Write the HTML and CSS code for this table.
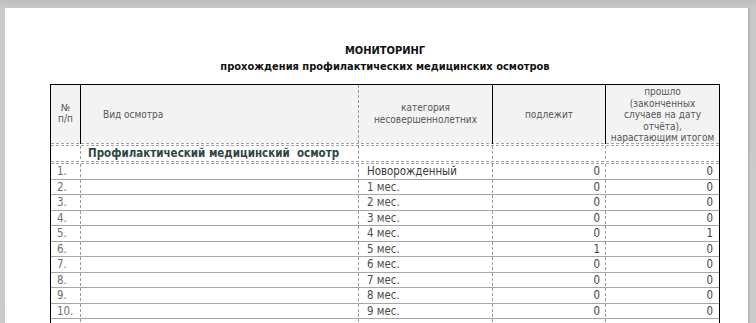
FILE: index.html
```html
<!DOCTYPE html>
<html lang="ru">
<head>
<meta charset="utf-8">
<title>Мониторинг</title>
<link rel="stylesheet" href="styles.css">
</head>
<body>
<div class="page">
  <div class="sheet">
    <div class="title">
      <div>МОНИТОРИНГ</div>
      <div>прохождения профилактических медицинских осмотров</div>
    </div>
    <div class="grid">
      <div class="row head">
        <div class="c c1 solid">№<br>п/п</div>
        <div class="c c2 dash left">Вид осмотра</div>
        <div class="c c3 solid">категория<br>несовершеннолетних</div>
        <div class="c c4 solid">подлежит</div>
        <div class="c c5">прошло<br>(законченных<br>случаев на дату<br>отчёта),<br>нарастающим итогом</div>
      </div>
      <div class="dbl"></div>
      <div class="row section">
        <div class="c dash"></div>
        <div class="c dash sec-title">Профилактический медицинский&nbsp; осмотр</div>
        <div class="c dash"></div>
        <div class="c dash"></div>
        <div class="c"></div>
      </div>
      <div class="dbl"></div>
      <div class="row data"><div class="c dash n">1.</div><div class="c dash"></div><div class="c dash cat dark">Новорожденный</div><div class="c dash num">0</div><div class="c num">0</div></div>
      <div class="row data"><div class="c dash n">2.</div><div class="c dash"></div><div class="c dash cat">1 мес.</div><div class="c dash num">0</div><div class="c num">0</div></div>
      <div class="row data"><div class="c dash n">3.</div><div class="c dash"></div><div class="c dash cat">2 мес.</div><div class="c dash num">0</div><div class="c num">0</div></div>
      <div class="row data"><div class="c dash n">4.</div><div class="c dash"></div><div class="c dash cat">3 мес.</div><div class="c dash num">0</div><div class="c num">0</div></div>
      <div class="row data"><div class="c dash n">5.</div><div class="c dash"></div><div class="c dash cat">4 мес.</div><div class="c dash num">0</div><div class="c num">1</div></div>
      <div class="row data"><div class="c dash n">6.</div><div class="c dash"></div><div class="c dash cat">5 мес.</div><div class="c dash num">1</div><div class="c num">0</div></div>
      <div class="row data"><div class="c dash n">7.</div><div class="c dash"></div><div class="c dash cat">6 мес.</div><div class="c dash num">0</div><div class="c num">0</div></div>
      <div class="row data"><div class="c dash n">8.</div><div class="c dash"></div><div class="c dash cat">7 мес.</div><div class="c dash num">0</div><div class="c num">0</div></div>
      <div class="row data"><div class="c dash n">9.</div><div class="c dash"></div><div class="c dash cat">8 мес.</div><div class="c dash num">0</div><div class="c num">0</div></div>
      <div class="row data"><div class="c dash n">10.</div><div class="c dash"></div><div class="c dash cat">9 мес.</div><div class="c dash num">0</div><div class="c num">0</div></div>
      <div class="row tail"><div class="c dash"></div><div class="c dash"></div><div class="c dash"></div><div class="c dash"></div><div class="c"></div></div>
    </div>
  </div>
</div>
</body>
</html>
```

FILE: styles.css
```css
html, body {
  margin: 0;
  height: 100%;
  overflow: hidden;
}
body {
  background: linear-gradient(180deg, #bdbdbd 0, #c9c9c9 8px, #cbcbcb 100%);
  padding: 8px 8px 0 5px;
  box-sizing: border-box;
}
.page {
  background: #fff;
  height: 400px;
  box-shadow: 1px 0 0 #b2b2b2, 2px 0 1px rgba(0,0,0,0.08);
  padding-top: 35px;
  box-sizing: border-box;
}
.sheet {
  margin-left: 45px;
  width: 670px;
}
.title {
  font-family: "DejaVu Sans", sans-serif;
  font-stretch: condensed;
  font-weight: bold;
  font-size: 11px;
  line-height: 16px;
  text-align: center;
  color: #111;
  margin-bottom: 9px;
}
.grid {
  border-left: 1px solid #000;
  border-right: 1px solid #000;
  font-family: "DejaVu Sans", sans-serif;
  font-stretch: condensed;
}
.row {
  display: grid;
  grid-template-columns: 30px 278px 134px 113px 113px;
}
.c {
  box-sizing: border-box;
  min-width: 0;
}
.dash {
  background-image: repeating-linear-gradient(180deg, #9a9a9a 0 3px, transparent 3px 5px);
  background-size: 1px 100%;
  background-position: right top;
  background-repeat: no-repeat;
}
.solid {
  border-right: 1px solid #000;
}
.head {
  border-top: 1px solid #000;
  height: 58px;
  background-color: #f3f3f3;
  font-size: 10px;
  line-height: 11.5px;
  color: #555;
}
.head .c {
  display: flex;
  align-items: center;
  justify-content: center;
  text-align: center;
}
.head .c.left {
  justify-content: flex-start;
  padding-left: 22px;
  text-align: left;
}
.head .c1 { padding-bottom: 2px; }
.head .c3 { padding-bottom: 1px; }
.head .c5 { padding-top: 1px; }
.dbl {
  height: 3px;
  background-image:
    repeating-linear-gradient(90deg, #a3a3a3 0 3px, transparent 3px 5px),
    repeating-linear-gradient(90deg, #a3a3a3 0 3px, transparent 3px 5px);
  background-size: 100% 1px, 100% 1px;
  background-position: left top, left bottom;
  background-repeat: no-repeat;
}
.section {
  height: 15px;
}
.sec-title {
  font-size: 11.5px;
  font-weight: bold;
  line-height: 15px;
  color: #2f4545;
  padding-left: 7px;
  white-space: nowrap;
}
.data {
  height: 15.5px;
  box-sizing: border-box;
  border-bottom: 1px solid #a6a6a6;
  font-size: 11.4px;
  line-height: 15px;
  color: #4d4d4d;
}
.tail {
  height: 20px;
}
.n {
  padding-left: 6px;
  color: #6f6f6f;
}
.cat {
  padding-left: 8px;
  white-space: nowrap;
}
.dark { color: #3a3a3a; }
.num {
  text-align: right;
  padding-right: 6px;
  color: #3d3d3d;
}
```
